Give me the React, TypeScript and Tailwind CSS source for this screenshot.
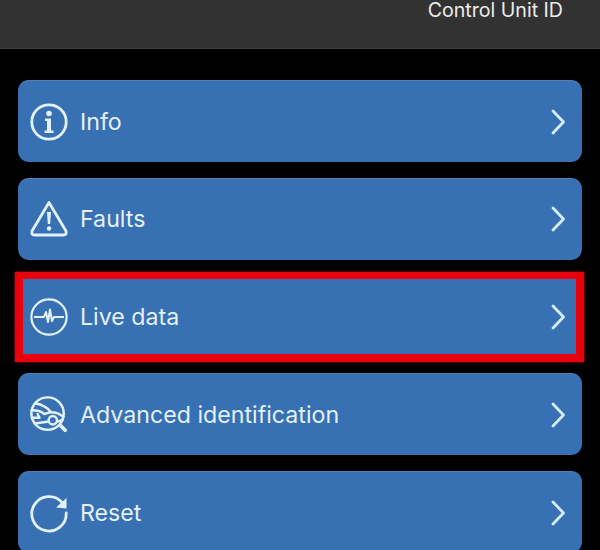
import type { ReactNode } from "react";

const ChevronIcon = () => (
  <svg width="18" height="26" viewBox="0 0 18 26" fill="none" stroke="#d5ecfa" strokeWidth="2.8" strokeLinecap="round" strokeLinejoin="round">
    <path d="M4 2 L14.5 13 L4 24" />
  </svg>
);

const InfoIcon = () => (
  <svg width="40" height="40" viewBox="0 0 40 40" fill="none" stroke="#e3f1fa">
    <circle cx="20" cy="20" r="17.2" strokeWidth="2.8" />
    <circle cx="20" cy="11.5" r="2.8" fill="#e3f1fa" stroke="none" />
    <path d="M16 16.5 h6 v12 h2.6 v2.6 h-9 v-2.6 h2.4 v-9.4 h-2 z" fill="#e3f1fa" stroke="none" />
  </svg>
);

const WarningIcon = () => (
  <svg width="40" height="40" viewBox="0 0 40 40" fill="none" stroke="#e3f1fa">
    <path d="M20 3.5 L37 32 Q38 36 34.5 36 H5.5 Q2 36 3 32 Z" strokeWidth="2.8" strokeLinejoin="round" />
    <path d="M18 13 h4 l-0.8 12 h-2.4 z" fill="#e3f1fa" stroke="none" />
    <circle cx="20" cy="29.5" r="2.2" fill="#e3f1fa" stroke="none" />
  </svg>
);

const PulseIcon = () => (
  <svg width="40" height="40" viewBox="0 0 40 40" fill="none" stroke="#e3f1fa" strokeLinejoin="round">
    <circle cx="20" cy="20" r="17.6" strokeWidth="2.2" />
    <path d="M5 20 H15 L17 15 L19 25 L21 12.5 L23 24 L25 20 H35" strokeWidth="2" />
  </svg>
);

const CarSearchIcon = () => (
  <svg width="42" height="42" viewBox="0 0 42 42" fill="none" stroke="#e3f1fa" strokeWidth="2.6" strokeLinecap="round" strokeLinejoin="round">
    <circle cx="19.5" cy="19.5" r="17" />
    <path d="M33 32 L38 37" strokeWidth="4" />
    <path d="M7 9 C14 10 19 13 23 18 C29 18 33 20 36 23" />
    <path d="M3 16 C9 16 13 17 16 20 L23 18" />
    <path d="M3.5 24 H11 L9 20" />
    <path d="M6 30 L19 28" />
    <circle cx="25" cy="26.5" r="4.4" />
    <path d="M30 28 L35.5 26" />
  </svg>
);

const ResetIcon = () => (
  <svg width="40" height="40" viewBox="0 0 40 40" fill="none" stroke="#e3f1fa">
    <path d="M33 9.5 A17.2 17.2 0 1 0 37.2 20" strokeWidth="2.8" strokeLinecap="round" />
    <path d="M37.5 5 L37.5 15.5 L27 14.5 Z" fill="#e3f1fa" stroke="none" />
  </svg>
);

function MenuRow({ icon, label }: { icon: ReactNode; label: string }) {
  return (
    <div className="h-[82px] shrink-0 flex items-center justify-between rounded-[11px] bg-[#3770b3] border-t border-[#4f80b8] pl-[11px] pr-[15px]">
      <div className="flex items-center">
        <div className="w-[40px] flex justify-center">{icon}</div>
        <span className="ml-[11px] pt-px text-[23.2px] text-[#e4f1fa]">{label}</span>
      </div>
      <ChevronIcon />
    </div>
  );
}

export default function App() {
  return (
    <div className="relative w-[600px] h-[550px] overflow-hidden bg-black font-['Inter','Liberation_Sans',sans-serif]">
      <div className="h-[49px] bg-[#323232] border-b border-[#3f3f3f] flex justify-end pr-[37px]">
        <span className="text-[19.6px] leading-[20px] text-[#ececec]">Control Unit ID</span>
      </div>

      <div className="flex flex-col gap-[15.75px] pt-[31px] px-[18px]">
        <MenuRow icon={<InfoIcon />} label="Info" />
        <MenuRow icon={<WarningIcon />} label="Faults" />
        <MenuRow icon={<PulseIcon />} label="Live data" />
        <MenuRow icon={<CarSearchIcon />} label="Advanced identification" />
        <MenuRow icon={<ResetIcon />} label="Reset" />
      </div>

      {/* red highlight around the Live data row */}
      <div className="absolute left-[15px] top-[272px] w-[569px] h-[90px] border-x-[8px] border-t-[7px] border-b-[8px] border-[#e8000f] shadow-[0_0_2px_#e8000f]" />
    </div>
  );
}
